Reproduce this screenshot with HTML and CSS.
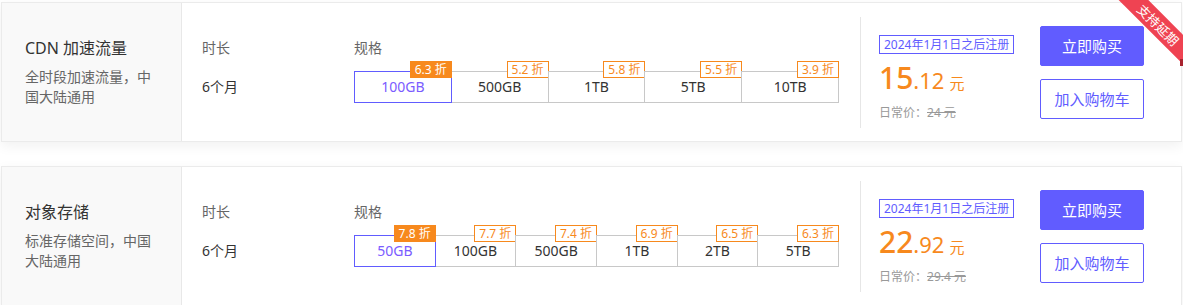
FILE: index.html
```html
<!DOCTYPE html>
<html lang="zh-CN">
<head>
  <meta charset="UTF-8">
  <title>产品套餐</title>
  <link rel="stylesheet" href="styles.css">
</head>
<body>
  <div class="list">

    <div class="card">
      <div class="ribbon"><span>支持延期</span></div>
      <div class="intro">
        <div class="intro-title">CDN 加速流量</div>
        <div class="intro-desc">全时段加速流量，中国大陆通用</div>
      </div>
      <div class="opts">
        <div class="opt opt-time">
          <div class="opt-label">时长</div>
          <div class="opt-value">6个月</div>
        </div>
        <div class="opt opt-spec">
          <div class="opt-label">规格</div>
          <div class="specs">
            <div class="spec active">100GB<span class="off">6.3 折</span></div>
            <div class="spec">500GB<span class="off">5.2 折</span></div>
            <div class="spec">1TB<span class="off">5.8 折</span></div>
            <div class="spec">5TB<span class="off">5.5 折</span></div>
            <div class="spec">10TB<span class="off">3.9 折</span></div>
          </div>
        </div>
      </div>
      <div class="price">
        <div class="price-tag">2024年1月1日之后注册</div>
        <div class="price-now"><b>15</b><i>.12</i><em>元</em></div>
        <div class="price-old">日常价：<s>24 元</s></div>
      </div>
      <div class="actions">
        <button class="btn btn-buy">立即购买</button>
        <button class="btn btn-cart">加入购物车</button>
      </div>
    </div>

    <div class="card">
      <div class="intro">
        <div class="intro-title">对象存储</div>
        <div class="intro-desc">标准存储空间，中国大陆通用</div>
      </div>
      <div class="opts">
        <div class="opt opt-time">
          <div class="opt-label">时长</div>
          <div class="opt-value">6个月</div>
        </div>
        <div class="opt opt-spec">
          <div class="opt-label">规格</div>
          <div class="specs">
            <div class="spec active">50GB<span class="off">7.8 折</span></div>
            <div class="spec">100GB<span class="off">7.7 折</span></div>
            <div class="spec">500GB<span class="off">7.4 折</span></div>
            <div class="spec">1TB<span class="off">6.9 折</span></div>
            <div class="spec">2TB<span class="off">6.5 折</span></div>
            <div class="spec">5TB<span class="off">6.3 折</span></div>
          </div>
        </div>
      </div>
      <div class="price">
        <div class="price-tag">2024年1月1日之后注册</div>
        <div class="price-now"><b>22</b><i>.92</i><em>元</em></div>
        <div class="price-old">日常价：<s>29.4 元</s></div>
      </div>
      <div class="actions">
        <button class="btn btn-buy">立即购买</button>
        <button class="btn btn-cart">加入购物车</button>
      </div>
    </div>

  </div>
</body>
</html>
```

FILE: styles.css
```css
body {
  margin: 0;
  background: #fff;
  font-family: "Noto Sans", "Noto Sans CJK SC", sans-serif;
  color: #333;
}

.list {
  padding: 2px 1px 0 1px;
  display: flex;
  flex-direction: column;
  gap: 24px;
}

.card {
  position: relative;
  display: flex;
  height: 140px;
  box-sizing: border-box;
  border: 1px solid #ebebeb;
  background: #fff;
  box-shadow: 0 4px 12px rgba(0, 0, 0, 0.06);
}

/* corner ribbon */
.ribbon {
  position: absolute;
  top: -3px;
  right: -2px;
  width: 66px;
  height: 66px;
  overflow: hidden;
}

.ribbon::before {
  content: "";
  position: absolute;
  top: 14px;
  left: -11px;
  width: 104px;
  height: 21px;
  background: #ef4352;
  transform: rotate(45deg);
}

.ribbon::after {
  content: "";
  position: absolute;
  right: 0;
  top: 59px;
  width: 3px;
  height: 7px;
  background: #a8232f;
}

.ribbon span {
  position: absolute;
  top: 17px;
  left: 15px;
  width: 52px;
  line-height: 16px;
  white-space: nowrap;
  text-align: center;
  font-size: 13px;
  color: #fff;
  transform: rotate(45deg);
  z-index: 1;
}

.intro {
  width: 180px;
  flex: none;
  box-sizing: border-box;
  padding: 0 23px;
  background: #f9f9f9;
  border-right: 1px solid #e8e8e8;
  display: flex;
  flex-direction: column;
  justify-content: center;
}

.intro-title {
  font-size: 16px;
  line-height: 22px;
  color: #333;
  margin-bottom: 8px;
}

.intro-desc {
  font-size: 14px;
  line-height: 20px;
  color: #666;
}

.opts {
  display: flex;
  padding: 35px 0 0 20px;
}

.opt-time {
  width: 152px;
}

.opt-spec {
  width: 485px;
}

.opt-label {
  font-size: 14px;
  line-height: 20px;
  color: #666;
}

.opt-value {
  margin-top: 13px;
  line-height: 32px;
  font-size: 14px;
}

.specs {
  display: flex;
  margin-top: 13px;
}

.spec {
  position: relative;
  flex: 1;
  height: 32px;
  line-height: 30px;
  box-sizing: border-box;
  border: 1px solid #c8c8c8;
  margin-left: -1px;
  text-align: center;
  font-size: 14px;
  color: #333;
}

.spec:first-child {
  margin-left: 0;
}

.spec.active {
  border-color: #615cff;
  color: #7b5cff;
  z-index: 1;
}

.off {
  position: absolute;
  top: -11px;
  right: -1px;
  height: 17px;
  line-height: 15px;
  padding: 0 4px;
  box-sizing: border-box;
  border: 1px solid #f7891d;
  background: #fff;
  color: #f7891d;
  font-size: 12px;
}

.active .off {
  background: #f7891d;
  color: #fff;
}

.price {
  margin: 14px 0 13px 21px;
  padding: 15px 0 0 18px;
  border-left: 1px solid #e6e6e6;
  width: 161px;
}

.price-tag {
  display: inline-block;
  height: 19px;
  line-height: 17px;
  box-sizing: border-box;
  padding: 0 4px;
  border: 1px solid #615cff;
  color: #615cff;
  font-size: 12px;
}

.price-now {
  margin-top: 6px;
  color: #f7891d;
  line-height: 36px;
}

.price-now b {
  font-size: 30px;
  font-weight: 500;
}

.price-now i {
  font-style: normal;
  font-size: 22px;
}

.price-now em {
  font-style: normal;
  font-size: 15px;
  margin-left: 5px;
}

.price-old {
  margin-top: 2px;
  font-size: 12px;
  color: #999;
}

.actions {
  display: flex;
  flex-direction: column;
  justify-content: center;
  gap: 13px;
}

.btn {
  width: 104px;
  height: 40px;
  font-family: inherit;
  font-size: 15px;
  border-radius: 2px;
  border: 1px solid #615cff;
  cursor: pointer;
}

.btn-buy {
  background: #615cff;
  color: #fff;
}

.btn-cart {
  background: #fff;
  color: #615cff;
}
```
